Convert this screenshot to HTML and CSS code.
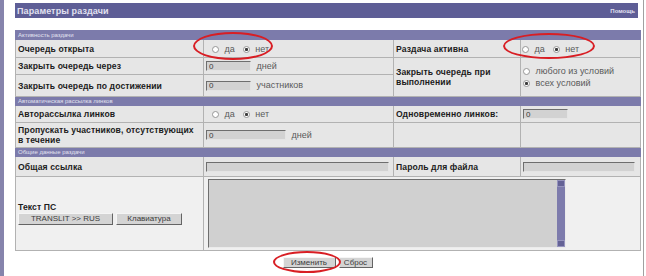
FILE: index.html
```html
<!DOCTYPE html>
<html>
<head>
    <meta charset="utf-8" />
    <title>Параметры раздачи</title>
    <link rel="stylesheet" href="styles.css">
</head>
<body>
<div class="page">
    <div class="sidebar"></div>
    <div class="main">
        <div class="titlebar">
            <span class="title">Параметры раздачи</span>
            <span class="help">Помощь</span>
        </div>

        <form class="settings">
            <table class="grid">
                <colgroup><col class="c1"><col class="c2"><col class="c3"><col class="c4"></colgroup>

                <tr class="section"><td colspan="4">Активность раздачи</td></tr>
                <tr class="row-a">
                    <th>Очередь открыта</th>
                    <td class="radios"><label><input type="radio" name="open"> да</label><label><input type="radio" name="open" checked> нет</label></td>
                    <th>Раздача активна</th>
                    <td class="radios right"><label><input type="radio" name="active"> да</label><label><input type="radio" name="active" checked> нет</label></td>
                </tr>
                <tr class="row-b">
                    <th>Закрыть очередь через</th>
                    <td><input class="field short" type="text" value="0"> <span class="unit">дней</span></td>
                    <th rowspan="2">Закрыть очередь при выполнении</th>
                    <td rowspan="2" class="stack">
                        <label><input type="radio" name="cond"> любого из условий</label>
                        <label><input type="radio" name="cond" checked> всех условий</label>
                    </td>
                </tr>
                <tr class="row-c">
                    <th>Закрыть очередь по достижении</th>
                    <td><input class="field short" type="text" value="0"> <span class="unit">участников</span></td>
                </tr>

                <tr class="section"><td colspan="4">Автоматическая рассылка линков</td></tr>
                <tr class="row-b">
                    <th>Авторассылка линков</th>
                    <td class="radios"><label><input type="radio" name="auto"> да</label><label><input type="radio" name="auto" checked> нет</label></td>
                    <th>Одновременно линков:</th>
                    <td><input class="field short" type="text" value="0"></td>
                </tr>
                <tr class="row-d">
                    <th>Пропускать участников, отсутствующих в течение</th>
                    <td><input class="field mid" type="text" value="0"> <span class="unit">дней</span></td>
                    <th></th>
                    <td></td>
                </tr>

                <tr class="section"><td colspan="4">Общие данные раздачи</td></tr>
                <tr class="row-e">
                    <th>Общая ссылка</th>
                    <td><input class="field wide" type="text"></td>
                    <th>Пароль для файла</th>
                    <td><input class="field pass" type="text"></td>
                </tr>
                <tr class="row-text">
                    <th>
                        Текст ПС
                        <div class="tools">
                            <button type="button" class="btn translit">TRANSLIT &gt;&gt; RUS</button>
                            <button type="button" class="btn keyboard">Клавиатура</button>
                        </div>
                    </th>
                    <td colspan="3">
                        <div class="memo">
                            <div class="memo-body"></div>
                            <div class="scroll"><span class="arrow"></span><span class="arrow"></span></div>
                        </div>
                    </td>
                </tr>
            </table>

            <div class="actions">
                <button type="submit" class="btn save">Изменить</button>
                <button type="reset" class="btn reset">Сброс</button>
            </div>
        </form>
    </div>

    <!-- red marks drawn over the screenshot -->
    <span class="mark mark-open"></span>
    <span class="mark mark-active"></span>
    <span class="mark mark-save"></span>
</div>
</body>
</html>
```

FILE: styles.css
```css
html, body {
    --title:   rgb(94, 94, 150);
    --section: rgb(124, 123, 171);
    --cell:    rgb(230, 230, 230);
    --cell-lt: rgb(240, 240, 240);
    --line:    rgb(178, 178, 178);
    --field:   rgb(210, 210, 210);
    --mark:    rgb(216, 30, 36);

    margin: 0;
    padding: 0;
    background-color: #fff;
    font-family: "Liberation Sans", Arial, sans-serif;
}

.page {
    display: flex;
    position: relative;
    width: 646px;
    height: 276px;
    overflow: hidden;
}

.sidebar {
    width: 4px;
    background-color: rgb(134, 132, 172);
}

.main {
    width: 624px;
    padding: 3px 4px 0 11px;
    border-right: 1px solid rgb(160, 160, 160);
}

.titlebar {
    display: flex;
    justify-content: space-between;
    align-items: center;
    height: 15px;
    width: 623px;
    padding: 0 3px 0 2px;
    box-sizing: border-box;
    background-color: var(--title);
    color: rgb(225, 225, 240);
}

.title {
    font-size: 9px;
    font-weight: bold;
    letter-spacing: 0.1px;
}

.help {
    font-size: 6px;
    font-weight: bold;
}

.settings {
    margin-top: 12px;
}

.grid {
    border-collapse: collapse;
    table-layout: fixed;
    width: 625px;
    font-size: 9px;
}

.c1 { width: 188px; }
.c2 { width: 190px; }
.c3 { width: 127px; }
.c4 { width: 120px; }

.grid th, .grid td {
    border: 1px solid var(--line);
    background-color: var(--cell);
    padding: 0 2px;
    text-align: left;
    vertical-align: middle;
}

.grid th {
    color: rgb(28, 28, 28);
    font-weight: bold;
    font-size: 8.6px;
    line-height: 10px;
    letter-spacing: 0.1px;
}

.grid td {
    color: rgb(90, 90, 90);
}

.grid tr.section td {
    height: 8px;
    padding: 0 2px;
    background-color: var(--section);
    color: rgb(226, 226, 240);
    font-size: 6px;
    line-height: 8px;
    border-color: var(--section);
}

.row-a td, .row-a th { height: 17px; }
.row-b td, .row-b th { height: 16px; }
.row-c td, .row-c th { height: 21px; }
.row-d td, .row-d th { height: 24px; }
.row-e td, .row-e th { height: 19px; }
.grid .row-text td, .grid .row-text th { height: 73px; background-color: var(--cell-lt); }

.grid td.radios {
    padding-left: 8px;
}

.radios label {
    margin-right: 8px;
}

.grid td.radios.right {
    padding-left: 1px;
}

.stack label {
    display: block;
    line-height: 12px;
}

input[type="radio"] {
    -webkit-appearance: none;
            appearance: none;
    width: 7px;
    height: 7px;
    margin: 0 3px 0 0;
    border: 1px solid rgb(150, 150, 150);
    border-radius: 50%;
    background-color: #fff;
    vertical-align: -1px;
}

input[type="radio"]:checked {
    background: radial-gradient(circle, rgb(60, 60, 60) 0 1.3px, #fff 1.8px);
}

.field {
    height: 10px;
    box-sizing: border-box;
    padding: 0 2px;
    margin: 0;
    border: 1px solid;
    border-color: rgb(110, 110, 110) rgb(228, 228, 228) rgb(228, 228, 228) rgb(110, 110, 110);
    background-color: var(--field);
    font-family: "Liberation Sans", Arial, sans-serif;
    font-size: 8px;
    color: rgb(60, 60, 60);
    vertical-align: middle;
}

.field.short { width: 45px; }
.field.mid   { width: 80px; }
.field.wide  { width: 183px; }
.field.pass  { width: 112px; }

.unit {
    margin-left: 3px;
}

.tools {
    display: flex;
    gap: 3px;
    margin-top: 1px;
}

.btn {
    height: 12px;
    padding: 0 6px;
    border: 1px solid;
    border-color: rgb(245, 245, 245) rgb(100, 100, 100) rgb(100, 100, 100) rgb(245, 245, 245);
    background-color: rgb(212, 212, 212);
    font-family: "Liberation Sans", Arial, sans-serif;
    font-size: 8px;
    font-weight: normal;
    line-height: 10px;
    color: rgb(60, 60, 60);
}

.btn.translit { width: 95px; }
.btn.keyboard { width: 66px; }

.memo {
    display: flex;
    width: 356px;
    height: 67px;
    margin-left: 2px;
    border: 1px solid;
    border-color: rgb(110, 110, 110) rgb(235, 235, 235) rgb(235, 235, 235) rgb(110, 110, 110);
}

.memo-body {
    flex: 1;
    background-color: rgb(208, 208, 208);
}

.scroll {
    display: flex;
    flex-direction: column;
    justify-content: space-between;
    width: 8px;
    background-color: rgb(125, 123, 172);
}

.scroll .arrow {
    height: 7px;
    background-color: rgb(100, 98, 150);
    border: 1px solid rgb(150, 148, 190);
    box-sizing: border-box;
}

.actions {
    display: flex;
    justify-content: center;
    gap: 3px;
    margin-top: 6px;
    width: 625px;
}

.actions .btn {
    height: 11px;
    padding: 0;
}

.btn.save  { width: 53px; }
.btn.reset { width: 34px; }

.mark {
    position: absolute;
    border: 2px solid var(--mark);
    border-radius: 50%;
    box-sizing: border-box;
}

.mark-open   { left: 193px; top: 32px;  width: 80px; height: 28px; }
.mark-active { left: 503px; top: 33px;  width: 92px; height: 26px; }
.mark-save   { left: 273px; top: 251px; width: 68px; height: 22px; }
```
